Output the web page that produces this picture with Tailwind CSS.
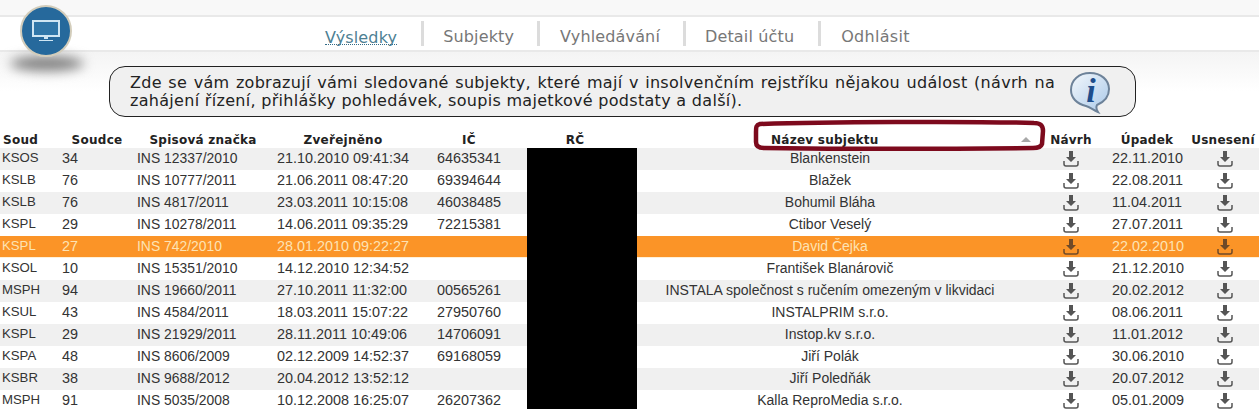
<!DOCTYPE html>
<html lang="cs">
<head>
    <meta charset="UTF-8">
    <title>Výsledky</title>
    <script src="https://cdn.jsdelivr.net/npm/@tailwindcss/browser@4"></script>
</head>
<body class="bg-white font-['Liberation_Sans',Arial,sans-serif] text-[#333]">
<div class="relative w-[1259px] h-[409px] overflow-hidden">
    <!-- logo -->
    <div class="absolute left-[10px] top-[56px] w-[74px] h-[15px] rounded-[50%] bg-[#808080] blur-[6px]"></div>
    <div class="absolute z-10 left-[20px] top-[5px] w-[52px] h-[52px] rounded-full bg-[#26699c] border-2 border-[#d3cdbb] flex items-center justify-center">
        <svg width="30" height="22" viewBox="0 0 30 22" fill="none">
            <rect x="2" y="1" width="26" height="15" fill="#2f76a8" stroke="#cfe6f3" stroke-width="2"/>
            <path d="M13 17h4v2h-4zM8 20h14v1H8z" fill="#cfe6f3"/>
        </svg>
    </div>

    <div class="h-[15px] bg-[#f8f8f8]"></div>
    <nav class="h-[37px] bg-white border-y-2 border-[#e9e9e9] flex items-center pl-[325px] font-['DejaVu_Sans',Verdana,sans-serif] text-[16px] tracking-[0.15px] text-[#777]">
        <a class="pr-[24px] h-[25px] pt-[10px] leading-[13px] text-[#4d7f93]"><span class="border-b border-dotted border-[#336b85] inline-block">Výsledky</span></a>
        <a class="pl-[19px] pr-[23px] border-l-[3px] border-[#dcdcdc] h-[25px] leading-[31px]">Subjekty</a>
        <a class="pl-[20px] pr-[23px] border-l-[3px] border-[#dcdcdc] h-[25px] leading-[31px]">Vyhledávání</a>
        <a class="pl-[19px] pr-[24px] border-l-[3px] border-[#dcdcdc] h-[25px] leading-[31px]">Detail účtu</a>
        <a class="pl-[20px] tracking-[0.3px] border-l-[3px] border-[#dcdcdc] h-[25px] leading-[31px]">Odhlásit</a>
    </nav>

    <div class="h-[78px] pt-[14px] pl-[109px] bg-gradient-to-b from-[#f4f4f4] to-white to-50%">
        <div class="w-[1027px] h-[51px] bg-[#f0f0f0] border border-[#222] rounded-[16px] flex items-center pl-[20px] gap-[15px]">
            <p class="w-[925px] shrink-0 font-['DejaVu_Sans',Verdana,sans-serif] text-[16px] tracking-[0.3px] leading-[18px] text-[#222] text-justify">Zde se vám zobrazují vámi sledované subjekty, které mají v insolvenčním rejstříku nějakou událost (návrh na zahájení řízení, přihlášky pohledávek, soupis majetkové podstaty a další).</p>
            <svg width="42" height="44" viewBox="0 0 42 44" class="shrink-0 -ml-[1px]">
                <defs>
                    <linearGradient id="bubble" x1="0" y1="0" x2="1" y2="1">
                        <stop offset="0" stop-color="#f4f8fc"/>
                        <stop offset="1" stop-color="#a9c8e8"/>
                    </linearGradient>
                </defs>
                <path d="M21 3C10 3 2 10 2 20c0 8 6 14 15 16 4 1 7 4 12 6-2-3-2-5-1-7 7-3 12-8 12-16C40 10 32 3 21 3z" fill="url(#bubble)" stroke="#6d8299" stroke-width="2"/>
                <text x="22" y="32" text-anchor="middle" font-family="Liberation Serif" font-style="italic" font-weight="bold" font-size="34" fill="#1d4d8c">i</text>
            </svg>
        </div>
    </div>

    <!-- table header -->
    <div class="relative h-[18px] grid grid-cols-[62px_70px_142px_138px_114px_98px_133px_288px_62px_80px_72px] items-center font-['DejaVu_Sans',Verdana,sans-serif] font-bold text-[12px] leading-[20px] tracking-[0.25px] text-[#222] text-center">
        <div class="text-left pl-[3px]">Soud</div>
        <div>Soudce</div>
        <div>Spisová značka</div>
        <div>Zveřejněno</div>
        <div>IČ</div>
        <div>RČ</div>
        <div></div>
        <div class="text-left pl-[14px]">Název subjektu</div>
        <div class="pr-[10px]">Návrh</div>
        <div>Úpadek</div>
        <div>Usnesení</div>
    </div>

    <!-- sort arrow and hand drawn frame -->
    <svg class="absolute z-10 left-[750px] top-[118px]" width="300" height="36" viewBox="0 0 300 36" fill="none">
        <path d="M271 24l5-5 5 5z" fill="#a8a8a8"/>
        <path d="M10 6C70 4 220 3 284 5c6 0 9 2 9 8l-1 13c-1 3-4 4-9 4-83 1-193 1-269 0-5 0-8-2-8-6V14c0-5 0-7 4-8z" stroke="#7d0a1d" stroke-width="4.500"/>
    </svg>

    <div id="rows" class="relative bg-white text-[14.4px] leading-[20px]"></div>
</div>
<script>
    // [soud, soudce, značka, zveřejněno, ič, název, úpadek]
    const data = [
        ["KSOS","34","INS 12337/2010","21.10.2010 09:41:34","64635341","Blankenstein","22.11.2010"],
        ["KSLB","76","INS 10777/2011","21.06.2011 08:47:20","69394644","Blažek","22.08.2011"],
        ["KSLB","76","INS 4817/2011","23.03.2011 10:15:08","46038485","Bohumil Bláha","11.04.2011"],
        ["KSPL","29","INS 10278/2011","14.06.2011 09:35:29","72215381","Ctibor Veselý","27.07.2011"],
        ["KSPL","27","INS 742/2010","28.01.2010 09:22:27","","David Čejka","22.02.2010"],
        ["KSOL","10","INS 15351/2010","14.12.2010 12:34:52","","František Blanárovič","21.12.2010"],
        ["MSPH","94","INS 19660/2011","27.10.2011 11:32:00","00565261","INSTALA společnost s ručením omezeným v likvidaci","20.02.2012"],
        ["KSUL","43","INS 4584/2011","18.03.2011 15:07:22","27950760","INSTALPRIM s.r.o.","08.06.2011"],
        ["KSPL","29","INS 21929/2011","28.11.2011 10:49:06","14706091","Instop.kv s.r.o.","11.01.2012"],
        ["KSPA","48","INS 8606/2009","02.12.2009 14:52:37","69168059","Jiří Polák","30.06.2010"],
        ["KSBR","38","INS 9688/2012","20.04.2012 13:52:12","","Jiří Poledňák","20.07.2012"],
        ["MSPH","91","INS 5035/2008","10.12.2008 16:25:07","26207362","Kalla ReproMedia s.r.o.","05.01.2009"],
    ];
    const rows = document.getElementById("rows");
    const icon = (color) => `<svg width="16" height="16" viewBox="0 0 16 16" fill="none" class="${color}"><path d="M6 0h4v6h3L8 11 3 6h3z" fill="currentColor"/><path d="M1 10v3c0 1.500 1 2 2 2h10c1 0 2-.5 2-2v-3" stroke="currentColor" stroke-width="1.500"/></svg>`;
    data.forEach((r, i) => {
        const orange = r[2] === "INS 742/2010";
        const row = document.createElement("div");
        const bg = orange ? "bg-[#fb9427] text-[#fde3b4] border-b border-[#fff0d8]" : i % 2 === 0 ? "bg-[#f0f0f0]" : "bg-white";
        row.className = "grid grid-cols-[62px_75px_140px_160px_90px_110px_386px_89px_78px_69px] h-[22px] " + bg;
        const ic = icon(orange ? "text-[#6f4a28]" : "text-[#555]");
        row.innerHTML = `<div class="pl-[2px] text-[13.2px]">${r[0]}</div><div>${r[1]}</div><div class="text-[13.9px]">${r[2]}</div><div>${r[3]}</div><div>${r[4]}</div><div></div><div class="text-center text-[14px]">${r[5]}</div><div class="flex items-center justify-center pl-[7px]">${ic}</div><div>${r[6]}</div><div class="flex items-center justify-center">${ic}</div>`;
        rows.appendChild(row);
    });
    // the RČ column is blacked out
    const mask = document.createElement("div");
    mask.className = "absolute left-[527px] top-0 w-[110px] h-[264px] bg-black";
    rows.appendChild(mask);
</script>
</body>
</html>
